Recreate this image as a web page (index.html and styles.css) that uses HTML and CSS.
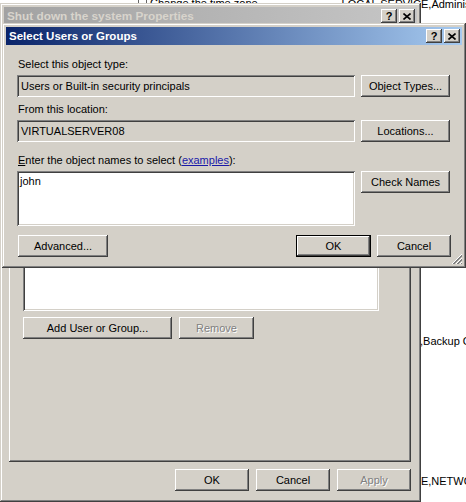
FILE: index.html
```html
<!DOCTYPE html>
<html>
<head>
<meta charset="utf-8">
<title>Select Users or Groups</title>
<link rel="stylesheet" href="styles.css">
</head>
<body>
<div class="desktop">
  <div class="bg-text bg-t1"><span class="bg-icon"></span>Change the time zone</div>
  <div class="bg-text bg-t2a">LOCAL SERVIC</div>
  <div class="bg-text bg-t2b">E,Administrators</div>
  <div class="bg-text bg-t3">,Backup Operators</div>
  <div class="bg-text bg-t4">CE,NETWORK SERVICE</div>

  <div class="window back">
    <div class="titlebar inactive">
      <span class="title title-back">Shut down the system Properties</span>
      <div class="caption-btns">
        <span class="cbtn">?</span>
        <span class="cbtn"><svg width="8" height="7" viewBox="0 0 8 7"><path d="M0.5 0.5 L7.5 6.5 M7.5 0.5 L0.5 6.5" stroke="#000" stroke-width="1.6" fill="none"/></svg></span>
      </div>
    </div>
    <div class="panel">
      <div class="listbox"></div>
      <div class="panel-row">
        <button class="btn w-add">Add User or Group...</button>
        <button class="btn disabled w-remove">Remove</button>
      </div>
    </div>
    <div class="footer">
      <button class="btn w-foot">OK</button>
      <button class="btn w-foot">Cancel</button>
      <button class="btn disabled w-foot">Apply</button>
    </div>
  </div>

  <div class="window front">
    <div class="titlebar active">
      <span class="title title-front">Select Users or Groups</span>
      <div class="caption-btns">
        <span class="cbtn">?</span>
        <span class="cbtn"><svg width="8" height="7" viewBox="0 0 8 7"><path d="M0.5 0.5 L7.5 6.5 M7.5 0.5 L0.5 6.5" stroke="#000" stroke-width="1.6" fill="none"/></svg></span>
      </div>
    </div>
    <div class="dlg-body">
      <div class="label">Select this object type:</div>
      <div class="field-row">
        <div class="field ro">Users or Built-in security principals</div>
        <button class="btn side">Object Types...</button>
      </div>
      <div class="label">From this location:</div>
      <div class="field-row row2">
        <div class="field ro">VIRTUALSERVER08</div>
        <button class="btn side">Locations...</button>
      </div>
      <div class="label"><u>E</u>nter the object names to select (<a href="#" class="link">examples</a>):</div>
      <div class="field-row area-row">
        <div class="field area">john</div>
        <button class="btn side">Check Names</button>
      </div>
      <div class="actions">
        <button class="btn w-adv">Advanced...</button>
        <div class="spacer"></div>
        <button class="btn default w-ok">OK</button>
        <button class="btn w-cancel">Cancel</button>
      </div>
    </div>
    <svg class="grip" width="12" height="12" viewBox="0 0 12 12">
      <path d="M11 1 L1 11 M11 5 L5 11 M11 9 L9 11" stroke="#ffffff" stroke-width="1" fill="none"/>
      <path d="M11 2 L2 11 M11 3 L3 11 M11 6 L6 11 M11 7 L7 11 M11 10 L10 11" stroke="#808080" stroke-width="1" fill="none"/>
    </svg>
  </div>
</div>
</body>
</html>
```

FILE: styles.css
```css
* { box-sizing: border-box; }
html, body { margin: 0; padding: 0; }
body {
  width: 466px;
  height: 502px;
  overflow: hidden;
  background: #ffffff;
  font-family: "Liberation Sans", Arial, sans-serif;
  font-size: 11px;
  color: #000;
}
.desktop { position: relative; width: 466px; height: 502px; overflow: hidden; }

.bg-text { position: absolute; white-space: nowrap; font-size: 11px; line-height: 11px; color: #000; }
.bg-t1 { left: 138px; top: -2px; }
.bg-icon { display: inline-block; width: 9px; height: 9px; border: 1px solid #666; margin-right: 3px; vertical-align: top; }
.bg-t2a { right: 45px; top: -1px; }
.bg-t2b { left: 421px; top: -1px; }
.bg-t3 { left: 420px; top: 336px; }
.bg-t4 { left: 413px; top: 476px; }

.window {
  position: absolute;
  background: #d4d0c8;
  display: flex;
  flex-direction: column;
  padding: 4px;
  box-shadow: inset -1px -1px #404040, inset 1px 1px #d4d0c8, inset -2px -2px #808080, inset 2px 2px #ffffff;
}
.back { left: 0; top: 3px; width: 421px; height: 499px; }
.front { left: 2px; top: 23px; width: 464px; }

.titlebar {
  height: 18px;
  display: flex;
  align-items: center;
  justify-content: space-between;
  padding-left: 3px;
  flex: none;
}
.titlebar .title { font-weight: bold; line-height: 18px; white-space: nowrap; }
.title-front { font-size: 11.5px; }
.title-back { font-size: 11.8px; }
.inactive { background: linear-gradient(90deg, #a2a2a2, #c6c6c6); color: #d8d4cc; }
.active { background: linear-gradient(90deg, #0a246a, #a6caf0); color: #ffffff; }
.caption-btns { display: flex; gap: 2px; margin-right: 2px; }
.cbtn {
  width: 16px;
  height: 14px;
  background: #d4d0c8;
  box-shadow: inset -1px -1px #404040, inset 1px 1px #ffffff, inset -2px -2px #808080;
  display: flex;
  align-items: center;
  justify-content: center;
  color: #000;
  font-weight: bold;
  font-size: 11px;
  line-height: 14px;
}

.btn {
  font-family: "Liberation Sans", Arial, sans-serif;
  font-size: 11px;
  color: #000;
  height: 22px;
  padding: 0;
  border: none;
  background: #d4d0c8;
  box-shadow: inset -1px -1px #404040, inset 1px 1px #ffffff, inset -2px -2px #808080, inset 2px 2px #d4d0c8;
  display: flex;
  align-items: center;
  justify-content: center;
  flex: none;
}
.btn.default {
  box-shadow: inset 0 0 0 1px #000, inset -2px -2px #404040, inset 2px 2px #ffffff, inset -3px -3px #808080;
}
.btn.disabled { color: #808080; text-shadow: 1px 1px 0 #ffffff; }

.panel {
  flex: 1;
  margin: 0 6px 0 5px;
  display: flex;
  flex-direction: column;
  justify-content: flex-end;
  padding: 0 0 123px 14px;
  box-shadow: inset -1px -1px #404040, inset 1px 1px #ffffff, inset -2px -2px #808080;
}
.listbox {
  width: 356px;
  height: 60px;
  background: #fff;
  box-shadow: inset 1px 1px #808080, inset -1px -1px #ffffff, inset 2px 2px #404040, inset -2px -2px #d4d0c8;
}
.panel-row { display: flex; gap: 7px; margin-top: 6px; }
.w-add { width: 149px; }
.w-remove { width: 75px; }
.footer {
  display: flex;
  justify-content: flex-end;
  gap: 7px;
  padding: 7px 6px 7px 0;
  flex: none;
}
.w-foot { width: 74px; }

.dlg-body { padding: 13px 11px 7px 11px; display: flex; flex-direction: column; }
.label { line-height: 13px; padding-left: 1px; margin-bottom: 4px; white-space: nowrap; }
.link { color: #1a1aa8; text-decoration: underline; }
.field-row { display: flex; gap: 6px; margin-bottom: 6px; align-items: flex-start; }
.row2 { margin-bottom: 12px; }
.field {
  width: 338px;
  height: 22px;
  padding: 3px 4px;
  line-height: 16px;
  white-space: nowrap;
  box-shadow: inset 1px 1px #808080, inset -1px -1px #ffffff, inset 2px 2px #404040, inset -2px -2px #d4d0c8;
}
.field.ro { background: #d4d0c8; }
.field.area { background: #ffffff; height: 55px; padding: 3px 3px; line-height: 14px; }
.area-row { margin-bottom: 9px; }
.side { width: 89px; }
.actions { display: flex; gap: 6px; align-items: center; padding-left: 1px; }
.spacer { flex: 1; }
.w-adv { width: 90px; }
.w-ok { width: 75px; }
.w-cancel { width: 74px; }

.grip { position: absolute; right: 3px; bottom: 3px; }
```
